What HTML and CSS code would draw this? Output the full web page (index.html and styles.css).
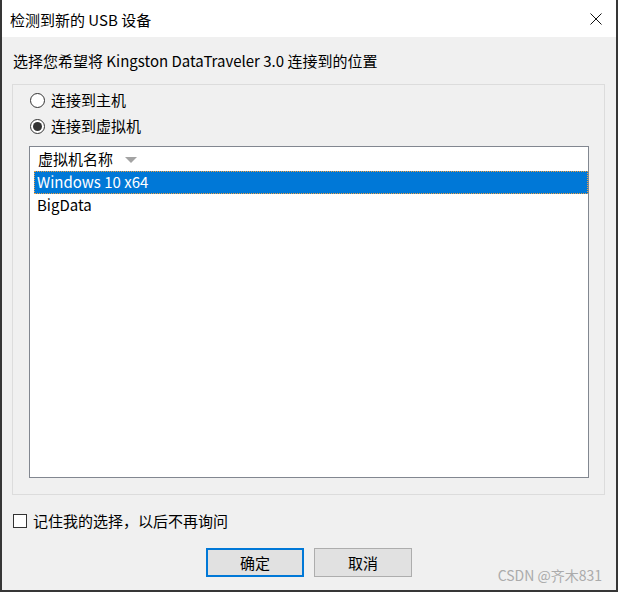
FILE: index.html
```html
<!DOCTYPE html>
<html lang="zh-CN">
<head>
<meta charset="utf-8">
<title>检测到新的 USB 设备</title>
<link rel="stylesheet" href="styles.css">
</head>
<body>
<div class="window">
  <div class="titlebar">
    <span class="title">检测到新的 USB 设备</span>
    <svg class="close" width="12" height="12" viewBox="0 0 12 12"><path d="M0.5 0.5 L11.5 11.5 M11.5 0.5 L0.5 11.5" stroke="#111" stroke-width="1" fill="none"/></svg>
  </div>
  <div class="main">
    <div class="prompt">选择您希望将 Kingston DataTraveler 3.0 连接到的位置</div>
    <div class="group">
      <div class="radio-row"><span class="radio"></span><span>连接到主机</span></div>
      <div class="radio-row"><span class="radio checked"></span><span>连接到虚拟机</span></div>
      <div class="list">
        <div class="list-header"><span>虚拟机名称</span><span class="sort"></span></div>
        <div class="list-item selected">Windows 10 x64</div>
        <div class="list-item">BigData</div>
      </div>
    </div>
    <div class="check-row"><span class="checkbox"></span><span>记住我的选择，以后不再询问</span></div>
    <div class="buttons">
      <div class="btn default">确定</div>
      <div class="btn">取消</div>
    </div>
    <div class="watermark">CSDN @齐木831</div>
  </div>
</div>
</body>
</html>
```
FILE: styles.css
```css
html, body {
  margin: 0;
  padding: 0;
  background: #f0f0f0;
}
body {
  font-family: "Noto Sans CJK SC", "Noto Sans", sans-serif;
  font-size: 15px;
  color: #000;
}
.window {
  width: 618px;
  height: 592px;
  box-sizing: border-box;
  border: 2px solid #363636;
  border-top: none;
  display: flex;
  flex-direction: column;
  background: #f0f0f0;
}
.titlebar {
  height: 37px;
  background: #fff;
  display: flex;
  align-items: center;
  justify-content: space-between;
  padding: 0 14px 0 8px;
  flex: none;
}
.title {
  line-height: 20px;
  margin-top: 2px;
}
.close {
  display: block;
  margin-top: 1px;
}
.main {
  flex: 1;
  position: relative;
  display: flex;
  flex-direction: column;
}
.prompt {
  line-height: 20px;
  margin: 14px 0 0 11px;
}
.group {
  margin: 13px 0 0 10px;
  width: 593px;
  height: 411px;
  box-sizing: border-box;
  border: 1px solid #dcdcdc;
  padding: 2px 0 0 17px;
  display: flex;
  flex-direction: column;
}
.radio-row {
  height: 26px;
  display: flex;
  align-items: center;
  gap: 6px;
  line-height: 20px;
}
.radio {
  width: 15px;
  height: 15px;
  box-sizing: border-box;
  border: 1px solid #333;
  border-radius: 50%;
  background: #fff;
  display: flex;
  align-items: center;
  justify-content: center;
  flex: none;
}
.radio.checked::after {
  content: "";
  width: 9px;
  height: 9px;
  border-radius: 50%;
  background: #333;
}
.list {
  margin: 7px 0 0 -1px;
  width: 560px;
  height: 332px;
  box-sizing: border-box;
  border: 1px solid #828790;
  background: #fff;
  padding: 0 0 0 4px;
}
.list-header {
  height: 24px;
  display: flex;
  align-items: center;
  padding-left: 4px;
  line-height: 20px;
}
.sort {
  width: 0;
  height: 0;
  border-left: 6px solid transparent;
  border-right: 6px solid transparent;
  border-top: 6px solid #a3a3a3;
  margin: 1px 0 0 12px;
}
.list-item {
  height: 23px;
  box-sizing: border-box;
  border: 1px solid transparent;
  padding-left: 2px;
  line-height: 20px;
}
.list-item.selected {
  background: #0078d7;
  color: #fff;
  border: 1px dotted #f0a040;
}
.check-row {
  margin: 16px 0 0 11px;
  display: flex;
  align-items: center;
  gap: 6px;
  line-height: 20px;
}
.checkbox {
  width: 14px;
  height: 14px;
  box-sizing: border-box;
  border: 1px solid #333;
  background: #fff;
  flex: none;
}
.buttons {
  margin: 17px 0 0 204px;
  display: flex;
  gap: 10px;
}
.btn {
  width: 98px;
  height: 29px;
  box-sizing: border-box;
  border: 1px solid #adadad;
  background: #e1e1e1;
  display: flex;
  align-items: center;
  justify-content: center;
  line-height: 20px;
}
.btn.default {
  border: 2px solid #0078d7;
}
.watermark {
  position: absolute;
  right: 14px;
  bottom: 6px;
  font-size: 14px;
  line-height: 18px;
  color: #ababab;
}
```
